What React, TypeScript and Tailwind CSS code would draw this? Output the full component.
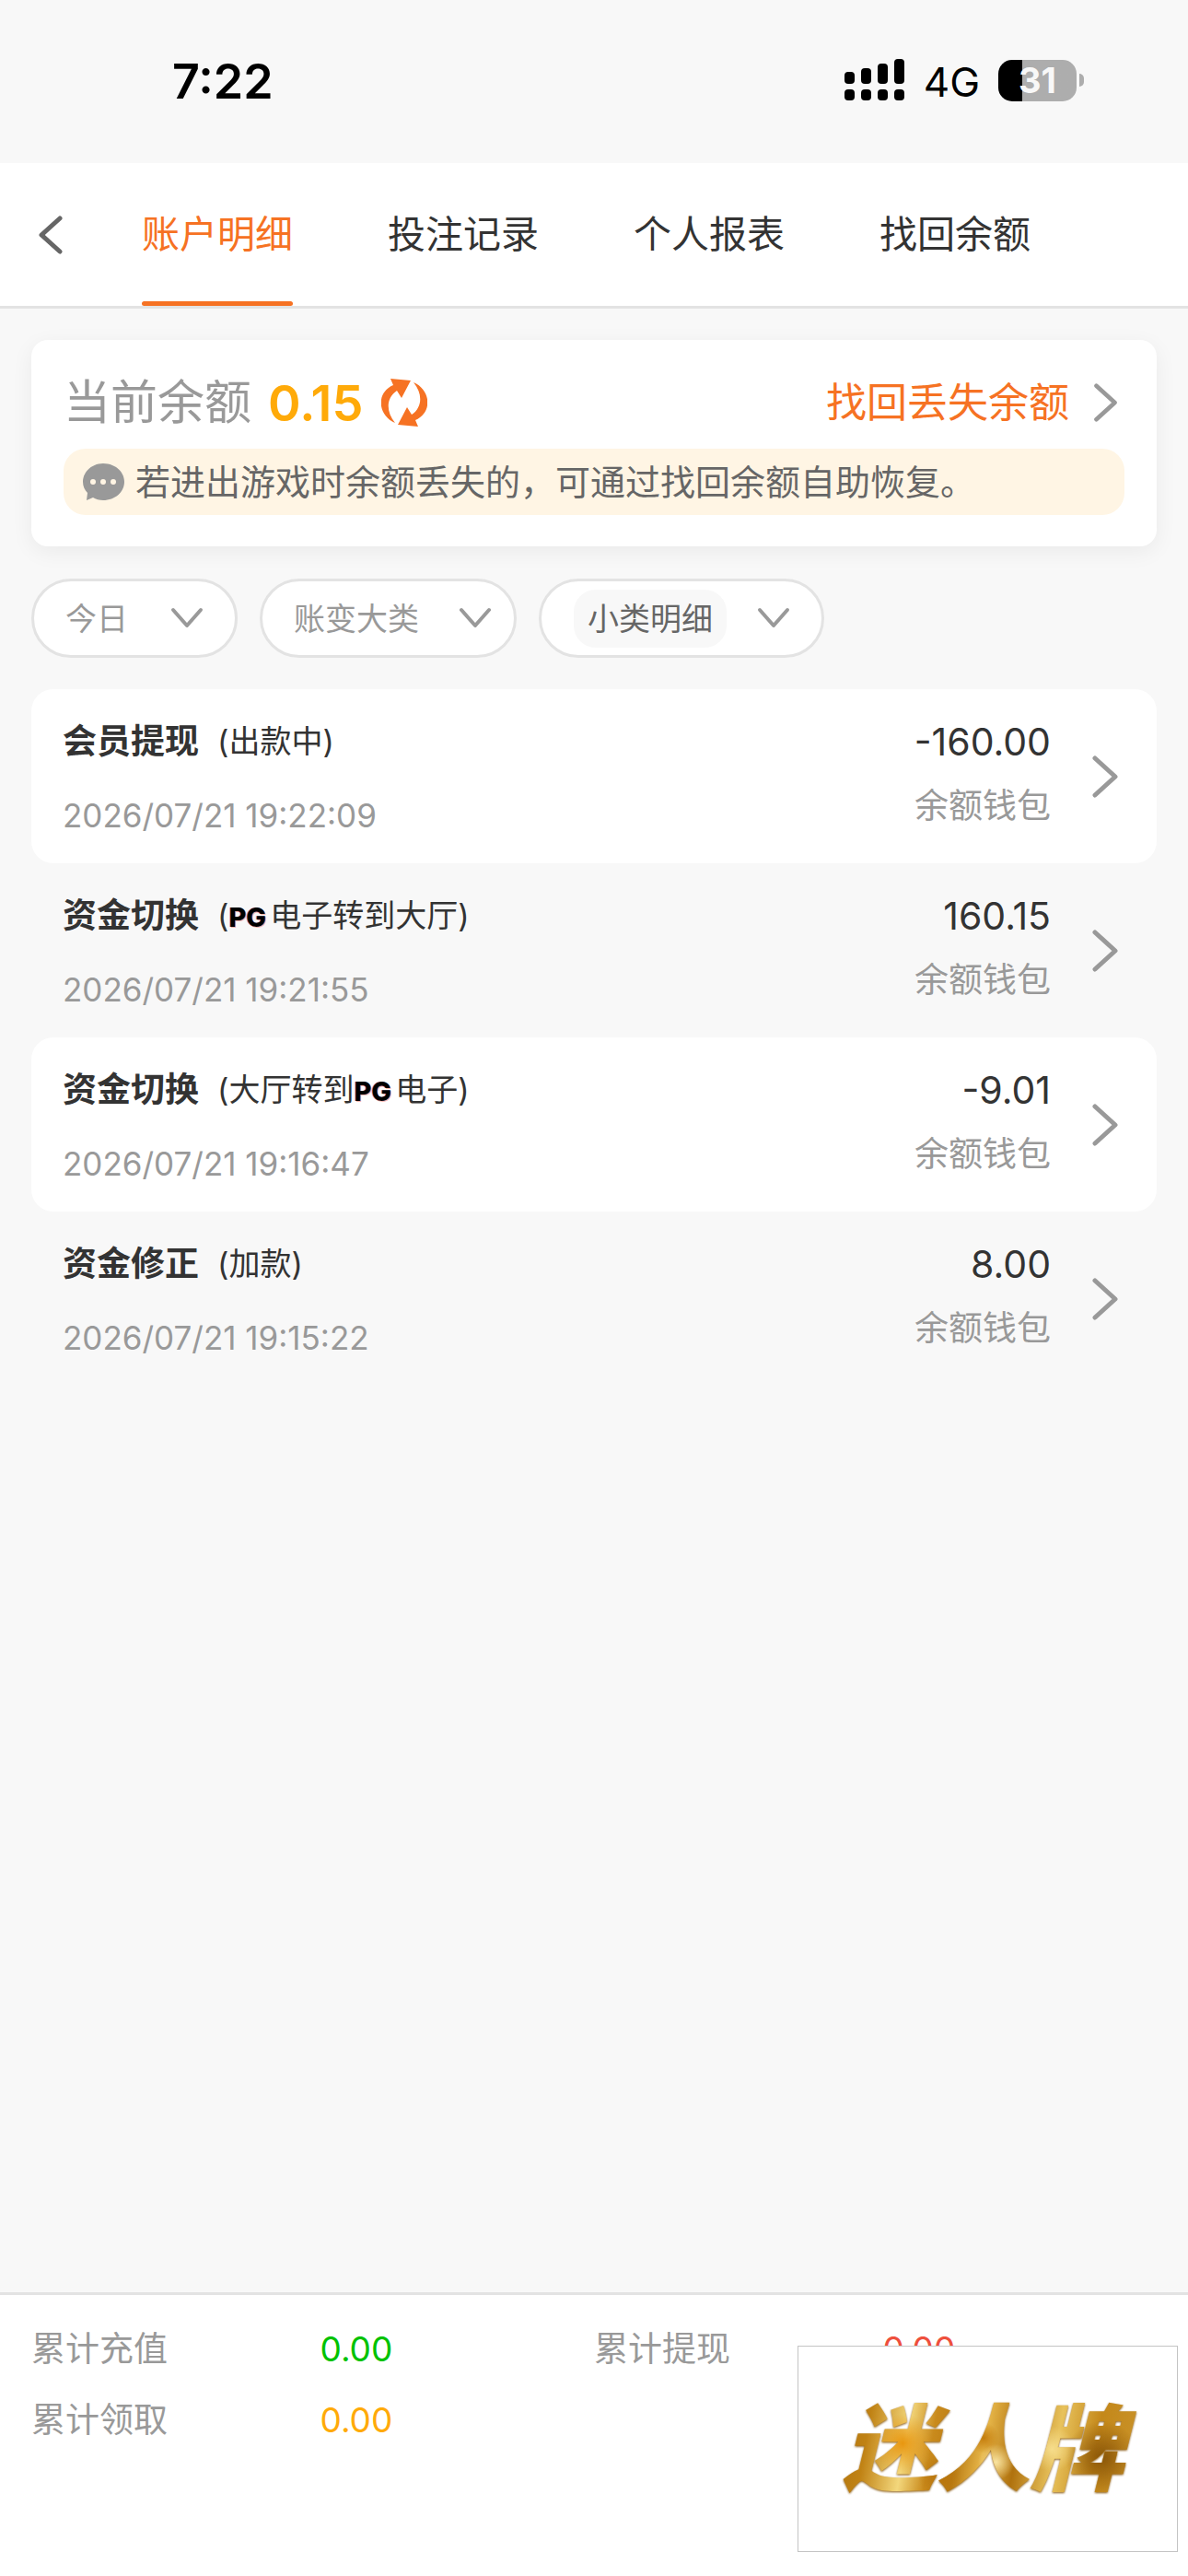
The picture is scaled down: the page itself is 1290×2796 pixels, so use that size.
import React, { useState } from 'react';

interface RecordItem {
  id: number;
  title: string;
  // 'PG' inside the note is rendered as the provider logo
  note: string;
  time: string;
  amount: string;
  wallet: string;
}

const tabs = ['账户明细', '投注记录', '个人报表', '找回余额'];

const records: RecordItem[] = [
  { id: 1, title: '会员提现', note: '(出款中)', time: '2026/07/21 19:22:09', amount: '-160.00', wallet: '余额钱包' },
  { id: 2, title: '资金切换', note: '(PG电子转到大厅)', time: '2026/07/21 19:21:55', amount: '160.15', wallet: '余额钱包' },
  { id: 3, title: '资金切换', note: '(大厅转到PG电子)', time: '2026/07/21 19:16:47', amount: '-9.01', wallet: '余额钱包' },
  { id: 4, title: '资金修正', note: '(加款)', time: '2026/07/21 19:15:22', amount: '8.00', wallet: '余额钱包' }
];

const totals = [
  { label: '累计充值', value: '0.00', color: 'text-[#00c200]' },
  { label: '累计提现', value: '0.00', color: 'text-[#ee4f3c]' },
  { label: '累计领取', value: '0.00', color: 'text-[#ffaa09]' }
];

const ChevronRight: React.FC<{ className?: string }> = ({ className }) => (
  <svg className={className} viewBox="0 0 28 46" fill="none" aria-hidden="true">
    <path d="M3 3L25 23L3 43" stroke="#999" strokeWidth="5" strokeLinecap="round" strokeLinejoin="round" />
  </svg>
);

const ChevronDown = () => (
  <svg className="pointer-events-none h-6 w-9 shrink-0" viewBox="0 0 36 24" fill="none" aria-hidden="true">
    <path d="M3 3L18 20L33 3" stroke="#999" strokeWidth="4" strokeLinecap="round" strokeLinejoin="round" />
  </svg>
);

const StatusBar = () => (
  <div className="flex h-[177px] items-start justify-between pt-[56px] pr-[113px] pl-[187px] text-black">
    <span className="text-[52px] leading-[66px] font-semibold">7:22</span>
    <div className="flex h-[62px] items-center">
      <svg className="h-[46px] w-[66px]" viewBox="0 0 66 46" aria-hidden="true">
        <rect x="0" y="14" width="11" height="13" rx="4" />
        <rect x="18" y="10" width="11" height="17" rx="4" />
        <rect x="36" y="5" width="11" height="22" rx="4" />
        <rect x="54" y="0" width="11" height="27" rx="4" />
        <rect x="0" y="33" width="11" height="12" rx="4" />
        <rect x="18" y="33" width="11" height="12" rx="4" />
        <rect x="36" y="33" width="11" height="12" rx="4" />
        <rect x="54" y="33" width="11" height="12" rx="4" />
      </svg>
      <span className="ml-5 pt-1 text-[44px] leading-[62px]">4G</span>
      <div className="ml-5 flex items-center gap-[3px]">
        <div className="flex h-[45px] w-[85px] items-center justify-center rounded-[15px] bg-linear-to-r from-black from-31% to-[#adadad] to-31%">
          <span className="text-[38px] leading-[45px] font-bold text-[#f8f8f8]">31</span>
        </div>
        <div className="h-[14px] w-[5px] rounded-r-full bg-[#adadad]" />
      </div>
    </div>
  </div>
);

const PgLogo = () => (
  <span className="mr-1 text-[29px] leading-none font-extrabold text-black [text-shadow:-1px_0_0_#7a2bd866,1px_1px_0_#f0442e66]">
    PG
  </span>
);

const RecordRow: React.FC<{ item: RecordItem; striped: boolean }> = ({ item, striped }) => {
  const [before, after] = item.note.split('PG');

  return (
    <li>
      <button
        className={`flex w-full items-center rounded-3xl pr-[42px] pl-[34px] text-left ${striped ? 'bg-white' : ''}`}
      >
        <div className="flex-1 pt-[32px] pb-[28px]">
          <div className="flex items-center gap-5 leading-[50px] text-[#333]">
            <span className="text-[37px] font-bold">{item.title}</span>
            <span className="text-[34px]">
              {before}
              {after !== undefined && <PgLogo />}
              {after}
            </span>
          </div>
          <div className="mt-[31px] text-[35px] leading-[48px] text-[#999]">{item.time}</div>
        </div>
        <div className="pb-1.5 text-right">
          <div className="text-[41px] leading-[50px] text-[#333]">{item.amount}</div>
          <div className="mt-5 text-[37px] leading-[50px] text-[#999]">{item.wallet}</div>
        </div>
        <ChevronRight className="ml-[45px] h-[46px] w-[28px]" />
      </button>
    </li>
  );
};

const App: React.FC = () => {
  const [activeTab, setActiveTab] = useState(0);

  return (
    <div className="relative flex min-h-screen flex-col bg-[#f8f8f8] font-['Inter','Noto_Sans_CJK_SC',sans-serif]">
      <StatusBar />

      <header className="flex h-[158px] items-stretch border-b-3 border-[#e3e3e3] bg-white pl-[41px]">
        <button aria-label="返回" className="mr-[85px]">
          <svg className="h-[42px] w-[28px]" viewBox="0 0 28 42" fill="none" aria-hidden="true">
            <path d="M24 3L4 21L24 39" stroke="#666" strokeWidth="5" strokeLinecap="round" strokeLinejoin="round" />
          </svg>
        </button>
        <nav className="flex gap-[103px]">
          {tabs.map((tab, i) => (
            <button
              key={tab}
              onClick={() => setActiveTab(i)}
              className={`flex flex-col justify-between text-[41px] leading-[155px] ${
                i === activeTab ? 'text-[#f67223]' : 'text-[#333]'
              }`}
            >
              {tab}
              {i === activeTab && <span className="-mt-[5px] h-[5px] w-full rounded-full bg-[#f67223]" />}
            </button>
          ))}
        </nav>
      </header>

      <main className="flex-1 px-[34px] pt-[34px]">
        <section className="rounded-[18px] bg-white px-[35px] pt-[34px] pb-[34px] shadow-[0_6px_24px_rgba(0,0,0,0.06)]">
          <div className="flex h-[68px] items-center">
            <span className="text-[51px] text-[#999]">当前余额</span>
            <span className="ml-[18px] text-[54px] font-semibold text-[#ffaa09]">0.15</span>
            <button aria-label="刷新" className="ml-5">
              <svg className="h-[52px] w-[50px]" viewBox="0 0 50 52" fill="#f67223" aria-hidden="true">
                <path d="M10 0L32 2L22 21L17 13C5 21 5 36 15 48C-4 40 -6 15 13 7Z" />
                <path d="M40 52L18 50L28 31L33 39C45 31 45 16 35 4C54 12 56 37 37 45Z" />
              </svg>
            </button>
            <a href="#recover" className="ml-auto flex items-center text-[44px] text-[#f67223]">
              找回丢失余额
              <ChevronRight className="mr-[7px] ml-[26px] h-[42px] w-[27px]" />
            </a>
          </div>
          <div className="mt-4 flex h-[72px] items-center rounded-3xl bg-[#fff5e4] pl-[21px]">
            <svg className="h-[40px] w-[45px]" viewBox="0 0 45 40" aria-hidden="true">
              <path d="M22 0C35 0 45 9 45 20C45 31 35 40 22 40C18 40 14 39 11 37L4 40L5 32C2 29 0 25 0 20C0 9 10 0 22 0Z" fill="#999" />
              <circle cx="11" cy="20" r="3" fill="#fff5e4" />
              <circle cx="22" cy="20" r="3" fill="#fff5e4" />
              <circle cx="33" cy="20" r="3" fill="#fff5e4" />
            </svg>
            <p className="ml-3 text-[38px] text-[#666]">若进出游戏时余额丢失的，可通过找回余额自助恢复。</p>
          </div>
        </section>

        <div className="mt-[35px] flex gap-6 text-[34px] text-[#999]">
          <label className="flex h-[86px] items-center gap-[46px] rounded-full border-3 border-[#e3e3e3] bg-white pr-[34px] pl-[34px]">
            <select aria-label="日期" className="appearance-none bg-transparent">
              <option>今日</option>
            </select>
            <ChevronDown />
          </label>
          <label className="flex h-[86px] items-center gap-[43px] rounded-full border-3 border-[#e3e3e3] bg-white pr-[24px] pl-[34px]">
            <select aria-label="账变大类" className="appearance-none bg-transparent">
              <option>账变大类</option>
            </select>
            <ChevronDown />
          </label>
          <label className="flex h-[86px] items-center gap-[33px] rounded-full border-3 border-[#e3e3e3] bg-white pr-[34px] pl-[35px]">
            <select aria-label="小类明细" className="h-[63px] appearance-none rounded-3xl bg-[#f8f8f8] px-[15px] text-[#666]">
              <option>小类明细</option>
            </select>
            <ChevronDown />
          </label>
        </div>

        <ul className="mt-[34px]">
          {records.map((item, i) => (
            <RecordRow key={item.id} item={item} striped={i % 2 === 0} />
          ))}
        </ul>
      </main>

      <footer className="border-t-3 border-[#e3e3e3] bg-white px-[34px] pt-[34px] pb-[144px]">
        <dl className="grid grid-cols-2 gap-y-[27px] text-[37px] leading-[50px]">
          {totals.map(total => (
            <div key={total.label} className="flex">
              <dt className="w-1/2 text-[#999]">{total.label}</dt>
              <dd className={`w-1/2 pl-2 ${total.color}`}>{total.value}</dd>
            </div>
          ))}
        </dl>
      </footer>

      {/* Floating game banner */}
      <a
        href="#game"
        className="absolute right-[11px] bottom-[26px] flex h-[224px] w-[413px] items-center justify-center border border-[#c4c4c4] bg-white pr-2.5"
      >
        <span className="bg-[radial-gradient(circle_at_24%_45%,#e8960f_0,transparent_12%),radial-gradient(circle_at_36%_75%,#b8740c_0,transparent_10%),radial-gradient(circle_at_54%_62%,#f8e3a0_0,transparent_10%),radial-gradient(circle_at_50%_40%,#c47c0c_0,transparent_9%),radial-gradient(circle_at_72%_50%,#f6dd8c_0,transparent_10%),radial-gradient(circle_at_88%_58%,#8a5608_0,transparent_13%),linear-gradient(100deg,#a86c0a_0%,#c08214_14%,#f3d77c_26%,#c98a1c_34%,#b87a12_42%,#e6b548_50%,#b0720e_60%,#e8c25c_72%,#c4881a_84%,#c9942c_100%)] bg-clip-text px-4 text-[102px] leading-[120px] font-black text-transparent italic drop-shadow-[0_1px_1px_#8a5a10]">
          迷人牌
        </span>
      </a>
    </div>
  );
};

export default App;
